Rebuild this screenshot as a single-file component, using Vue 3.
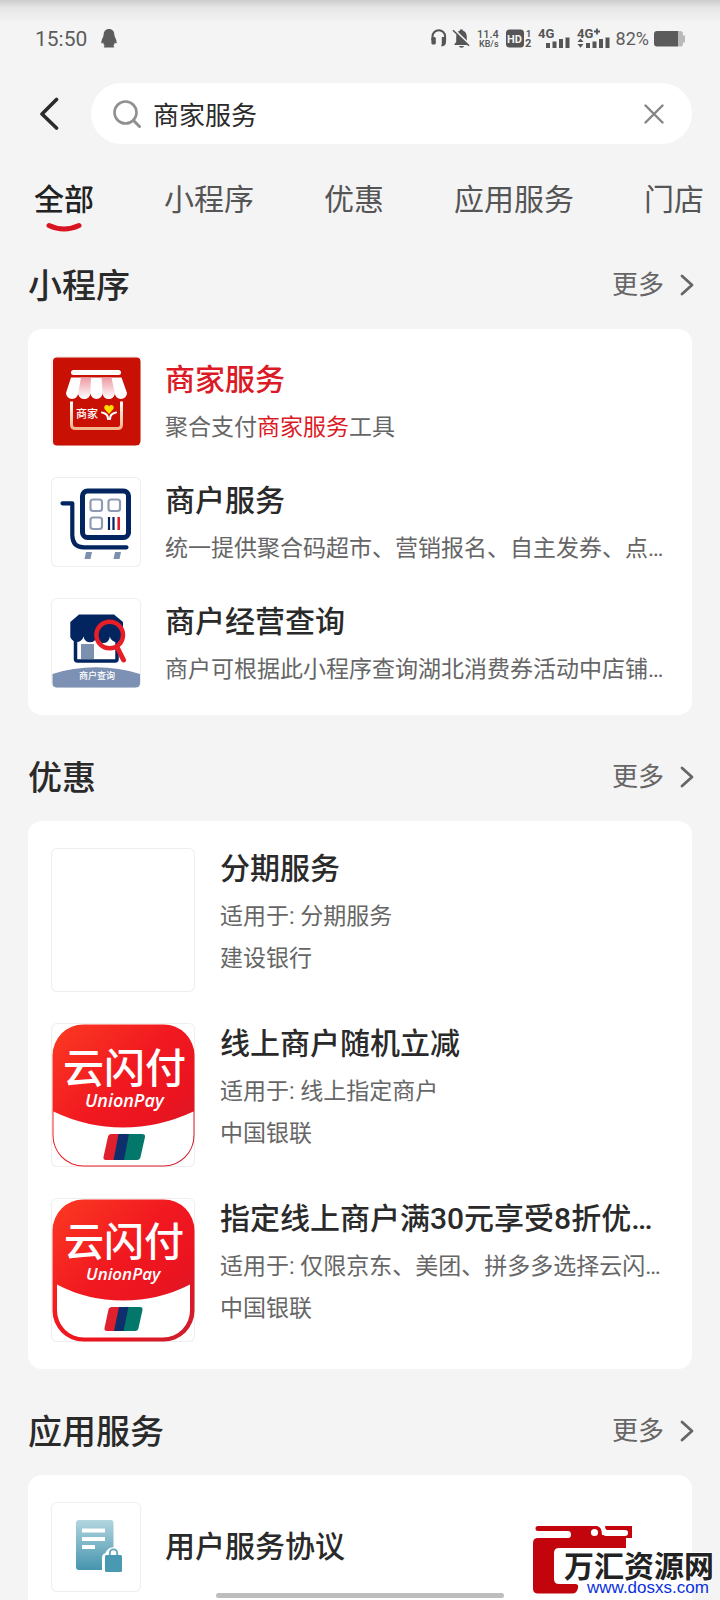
<template>
  <div class="page">
    <header class="status-bar">
      <div class="status-left">
        <span class="time">15:50</span>
        <svg width="16" height="20" viewBox="0 0 16 20" fill="#5c5c5c">
          <path d="M8 0C4.500 0 2.600 2.600 2.600 6C2.600 8 .4 10.500 .3 13.400C.3 15 1.200 14.800 2.200 13.400C2.400 15 3 16 3.800 16.800C2.600 17.200 2.400 18.600 3.500 18.600H12.500C13.600 18.600 13.400 17.200 12.200 16.800C13 16 13.600 15 13.800 13.400C14.800 14.800 15.700 15 15.700 13.400C15.600 10.500 13.400 8 13.400 6C13.400 2.600 11.500 0 8 0Z" />
        </svg>
      </div>
      <div class="status-right">
        <svg class="status-icons" width="182" height="24" viewBox="0 0 182 24" fill="#555">
          <path d="M1.500 13.500V9.500A6.300 6.300 0 0 1 14.100 9.500V13.500" fill="none" stroke="#555" stroke-width="2" />
          <rect x=".4" y="10" width="4.400" height="7.500" rx="1.500" />
          <path d="M10.800 10H15V15C15 17.600 13.500 19.300 10.400 19.600V17.500H10.800Z" />
          <path d="M23.500 18V17L25.200 15V10C25.200 6.500 26.600 4.400 29 3.600V2.500H31.800V3.600C34.500 4.500 35.800 6.800 35.800 10V14.500L38 16.800V18Z" />
          <path d="M28 19H33A2.500 1.800 0 0 1 28 19Z" />
          <path d="M23 2.500L39 18" stroke="#f4f4f4" stroke-width="2" />
          <path d="M22 3.200L38 18.700" stroke="#555" stroke-width="1.600" />
          <text class="medium" x="46" y="11" font-size="11">11.4</text>
          <text class="medium" x="48" y="20" font-size="9">KB/s</text>
          <rect x="75" y="2.500" width="18" height="18" rx="3.500" />
          <text class="heavy" x="76" y="16" font-size="11" fill="#f4f4f4">HD</text>
          <text class="heavy" x="95" y="10" font-size="9">1</text>
          <text class="heavy" x="94" y="20" font-size="11">2</text>
          <text class="heavy" x="107" y="11" font-size="13">4G</text>
          <path d="M115 16h4v5h-4zM121.500 14.500h4v6.500h-4zM128 12h4v9h-4zM134.500 10.500h4v10.500h-4z" />
          <text class="heavy" x="146" y="11" font-size="13">4G</text>
          <path d="M163 4.500h6M166 1.500v6" stroke="#555" stroke-width="1.800" />
          <path d="M146.500 15L149.500 11.500L152.500 15ZM146.500 17H152.500L149.500 20.800Z" />
          <path d="M155 16h4v5h-4zM161.500 14.500h4v6.500h-4zM168 12h4v9h-4zM174.500 10.500h4v10.500h-4z" />
        </svg>
        <span class="percent">82%</span>
        <svg width="32" height="16" viewBox="0 0 32 16">
          <path d="M24 0H26C28 0 29 1 29 3V4.500H31V11.500H29V13C29 15 28 15.500 26 15.500H24Z" fill="#b9b9b9" />
          <path d="M3 0H24V15.500H3C1 15.500 0 14.500 0 12.500V3C0 1 1 0 3 0Z" fill="#5a5a5a" />
        </svg>
      </div>
    </header>

    <form class="search-row" @submit.prevent>
      <button type="button" class="back" aria-label="返回">
        <svg width="20" height="34" viewBox="0 0 20 34">
          <path d="M17.500 2.500L3 17L17.500 31" fill="none" stroke="#2b2b2b" stroke-width="3.600" stroke-linecap="round" stroke-linejoin="round" />
        </svg>
      </button>
      <div class="search-box">
        <svg width="28" height="28" viewBox="0 0 28 28" fill="none" stroke="#909090">
          <circle cx="12.500" cy="12.500" r="11" stroke-width="2.600" />
          <path d="M20.500 20.500L26.500 26.500" stroke-width="3" stroke-linecap="round" />
        </svg>
        <input v-model="keyword" type="text" aria-label="搜索" />
        <button type="button" class="clear" aria-label="清空" @click="keyword = ''">
          <svg width="20" height="20" viewBox="0 0 20 20">
            <path d="M1.500 1.500L18.500 18.500M18.500 1.500L1.500 18.500" stroke="#858585" stroke-width="2.400" stroke-linecap="round" />
          </svg>
        </button>
      </div>
    </form>

    <nav class="tabs">
      <button
        v-for="tab in tabs"
        :key="tab"
        type="button"
        class="tab"
        :class="{ active: tab === activeTab }"
        @click="activeTab = tab"
      >
        {{ tab }}
        <svg v-if="tab === activeTab" class="smile" width="36" height="12" viewBox="0 0 36 12">
          <path d="M3 3.500Q18 10.500 33 3.500" fill="none" stroke="#d7141f" stroke-width="5" stroke-linecap="round" />
        </svg>
      </button>
    </nav>

    <main class="results">
      <section v-for="section in sections" :key="section.title">
        <div class="section-head">
          <h2>{{ section.title }}</h2>
          <a href="#" class="more" @click.prevent>
            更多
            <svg width="14" height="22" viewBox="0 0 14 22">
              <path d="M2 2L12 11L2 20" fill="none" stroke="#666" stroke-width="2.800" stroke-linecap="round" stroke-linejoin="round" />
            </svg>
          </a>
        </div>
        <ul class="card">
          <li v-for="item in section.items" :key="item.title" class="item" :class="{ large: section.large }">
            <div class="thumb">
              <svg v-if="item.icon === 'shop'" viewBox="0 0 90 90">
                <defs>
                  <linearGradient id="stripe" x1="0" y1="0" x2="0" y2="1">
                    <stop offset="0" stop-color="#ee9aa4" />
                    <stop offset="1" stop-color="#fff" />
                  </linearGradient>
                  <linearGradient id="frame" x1="0" y1="0" x2="0" y2="1">
                    <stop offset="0" stop-color="#fff" />
                    <stop offset="1" stop-color="#f5b48c" />
                  </linearGradient>
                </defs>
                <rect x="2" y="1.500" width="87.500" height="88" rx="4" fill="#c81004" />
                <rect x="20" y="14" width="50" height="5" rx="2.500" fill="#fff" />
                <path d="M20 21.500H70.500L76 37A6.100 6.100 0 0 1 63.800 37A6.100 6.100 0 0 1 51.600 37A6.100 6.100 0 0 1 39.400 37A6.100 6.100 0 0 1 27.200 37A6.100 6.100 0 0 1 15 37Z" fill="#fff" />
                <path d="M30 21.500H40L39.400 37A6.100 6.100 0 0 1 27.200 37Z" fill="url(#stripe)" />
                <path d="M50.500 21.500H60.500L63.800 37A6.100 6.100 0 0 1 51.600 37Z" fill="url(#stripe)" />
                <path d="M20.500 45.500V68.500Q20.500 72.500 24.500 72.500H66.500Q70.500 72.500 70.500 68.500V45.500" fill="none" stroke="url(#frame)" stroke-width="3" />
                <text class="icon-text" x="25" y="62" font-size="11" fill="#fff">商家</text>
                <path d="M51 56.500Q57 57.500 57 63M65 56.500Q59 57.500 59 63" fill="none" stroke="#fff" stroke-width="2.200" stroke-linecap="round" />
                <path d="M58 58L54 53.500C51.500 50 56 47 58 50.500C60 47 64.500 50 62 53.500Z" fill="#ffdc00" />
              </svg>
              <svg v-else-if="item.icon === 'cart'" viewBox="0 0 90 90">
                <path d="M11.500 26.300H21.300V58Q21.300 70.300 33 70.300H75.500" fill="none" stroke="#02245f" stroke-width="4.200" stroke-linecap="round" stroke-linejoin="round" />
                <rect x="31.500" y="14" width="46" height="46.500" rx="5" fill="none" stroke="#02245f" stroke-width="5" />
                <g fill="none" stroke="#8f9bb3" stroke-width="2.200">
                  <rect x="39.500" y="22.500" width="11.500" height="11.500" rx="2.500" />
                  <rect x="57.500" y="22.500" width="11.500" height="11.500" rx="2.500" />
                  <rect x="39.500" y="40.500" width="11.500" height="11.500" rx="2.500" />
                </g>
                <path d="M58 40V53M62.500 40V53" stroke="#02245f" stroke-width="2.200" />
                <path d="M67.700 40V53" stroke="#e02027" stroke-width="2.600" />
                <path d="M35 75H41L39.500 82H33.500ZM64 75H70L68.500 82H62.500Z" fill="#7c90b0" />
              </svg>
              <svg v-else-if="item.icon === 'query'" viewBox="0 0 90 90">
                <rect x="24.500" y="30" width="41.500" height="33" rx="2" fill="#fff" stroke="#02245f" stroke-width="3.500" />
                <path d="M28 16.500H63L72 24V36A6.500 6.500 0 0 1 58.800 38.500A6.600 6.600 0 0 1 45.600 38.500A6.600 6.600 0 0 1 32.500 38.500A6.600 6.600 0 0 1 19.300 36V24Z" fill="#02245f" />
                <rect x="30" y="46" width="13" height="15" fill="#7c90b0" />
                <circle cx="58.700" cy="37" r="13.300" fill="none" stroke="#e61e28" stroke-width="4.500" />
                <path d="M66.500 50L72.500 62" stroke="#e61e28" stroke-width="5" stroke-linecap="round" />
                <path d="M1.500 76Q22 69.300 45 69.300T89 76V85Q89 89.500 85 89.500H6Q1.500 89.500 1.500 85Z" fill="#7c91b3" />
                <text class="icon-text" x="28" y="81" font-size="9" fill="#fff">商户查询</text>
              </svg>
              <svg v-else-if="item.icon === 'unionpay'" viewBox="0 0 144 144">
                <defs>
                  <linearGradient id="pay" x1="0" y1="0" x2="1" y2="1">
                    <stop offset="0" stop-color="#fb3a22" />
                    <stop offset=".45" stop-color="#f11820" />
                    <stop offset=".7" stop-color="#ea1420" />
                    <stop offset="1" stop-color="#c8202f" />
                  </linearGradient>
                </defs>
                <rect x="1.500" y="1.500" width="142" height="142" rx="31" fill="url(#pay)" />
                <path d="M2.500 88.500Q36 104.500 72 104.500T142.500 88.500V112A30 30 0 0 1 112.500 142.500H32.500A30 30 0 0 1 2.500 112Z" fill="#fff" />
                <text class="icon-text" x="12" y="60" font-size="41" fill="#fff">云闪付</text>
                <text class="latin-text" x="34" y="84" font-size="18" fill="#fff">UnionPay</text>
                <path d="M60 111H70L64 137H55Q52 137 52.500 134L57 113.500Q57.500 111 60 111Z" fill="#e0202c" />
                <path d="M67.500 111H80L74 137H62.500Z" fill="#0f2f6c" />
                <path d="M78 111H91Q94.500 111 94 114L89.500 134Q89 137 86 137H73Z" fill="#04776b" />
              </svg>
              <svg v-else-if="item.icon === 'unionpay-framed'" viewBox="0 0 144 144">
                <rect x="1.500" y="1.500" width="142" height="142" rx="31" fill="url(#pay)" />
                <path d="M6 86.500Q36 102.500 72 102.500T139 86.500V112A27 27 0 0 1 112 139.500H33A27 27 0 0 1 6 112Z" fill="#fff" />
                <text class="icon-text" x="13" y="58" font-size="40" fill="#fff">云闪付</text>
                <text class="latin-text" x="35" y="82" font-size="17" fill="#fff">UnionPay</text>
                <path d="M61 109H70L64 133H56Q53 133 53.500 130L57.500 111.500Q58 109 61 109Z" fill="#e0202c" />
                <path d="M68 109H79L73.500 133H63Z" fill="#0f2f6c" />
                <path d="M77.500 109H89Q92 109 91.500 112L87.500 130Q87 133 84 133H72.500Z" fill="#04776b" />
              </svg>
              <svg v-else-if="item.icon === 'agreement'" viewBox="0 0 90 90">
                <defs>
                  <linearGradient id="doc" x1="0" y1="0" x2="0" y2="1">
                    <stop offset="0" stop-color="#b3d5df" />
                    <stop offset="1" stop-color="#4594ae" />
                  </linearGradient>
                </defs>
                <path d="M28 18H59.500Q62.500 18 62.500 21V45Q56 46 54.500 51Q51 52 51 56V68H28Q25 68 25 65V21Q25 18 28 18Z" fill="url(#doc)" />
                <path d="M31 26.500H54V30.500H31ZM31 35H54V39H31ZM31 43H44V47H31Z" fill="#fff" />
                <path d="M58.800 54V51A3.700 3.700 0 0 1 66.200 51V54" fill="none" stroke="#5fa5bb" stroke-width="1.800" />
                <rect x="54" y="53" width="17" height="17" rx="1.500" fill="#4a99b3" />
              </svg>
            </div>
            <div class="item-body">
              <h3 :class="{ hit: item.hit }">{{ item.title }}</h3>
              <p v-for="(line, i) in item.lines" :key="i">
                <span v-for="(part, j) in splitHits(line)" :key="j" :class="{ hit: part === term }">{{ part }}</span>
              </p>
            </div>
          </li>
        </ul>
      </section>
    </main>

    <div class="home-bar"></div>

    <svg class="site-mark" width="182" height="72" viewBox="0 0 182 72">
      <path
        d="M5 0H64Q69 1 69 9H75L99 7V12H93V22H26Q21 22 21 27V53Q21 58 26 58H42Q46 58 45 62Q44 67.500 39 67.500H5Q0 67.500 0 62.500V17Q0 12 5 12H35Q38 12 38 8.500T35 5H5Q2.500 5 2.500 2.500T5 0Z"
        fill="#c2040c"
      />
      <path d="M72 0H99V12H90L92 10Q95 9 95 7T92 4H74Q72 3 72 0Z" fill="#c2040c" />
      <rect x="70" y="4" width="25" height="6" rx="3" fill="#fff" />
      <circle cx="61.500" cy="6.500" r="3.600" fill="#fff" />
      <text class="mark-name" x="31" y="51" font-size="30" fill="#222" stroke="#fff" stroke-width="2" paint-order="stroke">万汇资源网</text>
      <text class="mark-url" x="54" y="67" font-size="17" fill="#0a2fe0">www.dosxs.com</text>
    </svg>
  </div>
</template>

<script setup>
import { ref } from 'vue'

const term = '商家服务'
const keyword = ref(term)

const tabs = ['全部', '小程序', '优惠', '应用服务', '门店']
const activeTab = ref('全部')

const sections = [
  {
    title: '小程序',
    items: [
      { icon: 'shop', title: '商家服务', hit: true, lines: ['聚合支付商家服务工具'] },
      { icon: 'cart', title: '商户服务', lines: ['统一提供聚合码超市、营销报名、自主发券、点…'] },
      { icon: 'query', title: '商户经营查询', lines: ['商户可根据此小程序查询湖北消费券活动中店铺…'] }
    ]
  },
  {
    title: '优惠',
    large: true,
    items: [
      { icon: '', title: '分期服务', lines: ['适用于: 分期服务', '建设银行'] },
      { icon: 'unionpay', title: '线上商户随机立减', lines: ['适用于: 线上指定商户', '中国银联'] },
      {
        icon: 'unionpay-framed',
        title: '指定线上商户满30元享受8折优…',
        lines: ['适用于: 仅限京东、美团、拼多多选择云闪…', '中国银联']
      }
    ]
  },
  {
    title: '应用服务',
    items: [{ icon: 'agreement', title: '用户服务协议', lines: [] }]
  }
]

const splitHits = (line) => line.split(new RegExp(`(${term})`)).filter(Boolean)
</script>

<style>
body {
  margin: 0;
  background: #f4f4f4;
}
</style>

<style scoped>
.page {
  position: relative;
  display: flex;
  flex-direction: column;
  height: 100vh;
  overflow: hidden;
  background: linear-gradient(#cdcdcd, #e6e6e6 8px, #f4f4f4 24px);
  color: #2a2a2a;
  font-family: Roboto, 'Noto Sans CJK SC', sans-serif;
}

button,
input {
  border: none;
  padding: 0;
  background: none;
  color: inherit;
  font: inherit;
}

button {
  cursor: pointer;
}

svg {
  display: block;
  flex-shrink: 0;
}

.status-bar {
  display: flex;
  flex-shrink: 0;
  justify-content: space-between;
  align-items: center;
  height: 77px;
  padding: 0 34px 0 35px;
  color: #5c5c5c;
}

.status-left {
  display: flex;
  align-items: center;
  gap: 14px;
}

.time {
  font-size: 21px;
}

.status-right {
  display: flex;
  align-items: center;
  gap: 3px;
}

.percent {
  margin-right: 2px;
  font-size: 18px;
}

.medium {
  font-weight: 500;
}

.heavy {
  font-weight: 700;
}

.search-row {
  display: flex;
  flex-shrink: 0;
  align-items: center;
  gap: 32px;
  padding: 6px 28px 0 39px;
}

.search-box {
  display: flex;
  flex: 1;
  align-items: center;
  gap: 12px;
  height: 61px;
  padding: 0 28px 0 22px;
  border-radius: 31px;
  background: #fff;
}

.search-box input {
  flex: 1;
  min-width: 0;
  height: 40px;
  outline: none;
  font-size: 26px;
}

.tabs {
  display: flex;
  flex-shrink: 0;
  gap: 70px;
  height: 79px;
  padding-left: 34px;
}

.tab {
  position: relative;
  flex-shrink: 0;
  padding: 34px 0 1px;
  color: #555;
  font-size: 30px;
  line-height: 44px;
}

.tab.active {
  color: #222;
  font-weight: 500;
}

.smile {
  position: absolute;
  left: 12px;
  bottom: -11px;
}

.results {
  flex: 1;
  min-height: 0;
  padding: 0 28px;
  overflow: hidden auto;
  scrollbar-width: none;
}

.section-head {
  display: flex;
  justify-content: space-between;
  align-items: center;
  height: 52px;
  margin-right: -2px;
  padding: 37px 0 17px;
}

h2 {
  margin: 0;
  font-size: 34px;
  font-weight: 500;
  line-height: 52px;
}

.more {
  display: flex;
  align-items: center;
  gap: 16px;
  padding-bottom: 2px;
  color: #666;
  font-size: 26px;
  line-height: 36px;
  text-decoration: none;
}

.card {
  display: flex;
  flex-direction: column;
  gap: 31px;
  margin: 0;
  padding: 27px 24px 27px 23px;
  border-radius: 14px;
  background: #fff;
  list-style: none;
}

.item {
  display: flex;
  align-items: center;
  gap: 24px;
}

.item.large {
  align-items: flex-start;
  gap: 25px;
}

.thumb {
  flex-shrink: 0;
  width: 90px;
  height: 90px;
  border-radius: 6px;
  box-shadow: inset 0 0 0 1px #eee;
  overflow: hidden;
}

.thumb svg {
  width: 100%;
  height: 100%;
}

.large .thumb {
  width: 144px;
  height: 144px;
}

.item-body {
  flex: 1;
  min-width: 0;
}

h3,
p {
  margin: 0;
  overflow: hidden;
  white-space: nowrap;
}

h3 {
  font-size: 30px;
  font-weight: 500;
  line-height: 42px;
}

p {
  margin-top: 10px;
  color: #666;
  font-size: 23px;
  line-height: 32px;
}

h3 + p {
  margin-top: 11px;
}

.hit {
  color: #dc1a25;
}

.icon-text {
  font-family: 'Noto Sans CJK SC', sans-serif;
  font-weight: 500;
}

.latin-text {
  font-family: 'Open Sans', sans-serif;
  font-style: italic;
  font-weight: 600;
}

.home-bar {
  position: absolute;
  bottom: 2px;
  left: 30%;
  width: 40%;
  height: 5px;
  border-radius: 3px;
  background: #bdbdbd;
}

.site-mark {
  position: absolute;
  right: 5px;
  bottom: 2px;
}

.mark-name {
  font-family: 'Noto Sans CJK SC', sans-serif;
  font-weight: 700;
}

.mark-url {
  font-family: 'Liberation Sans', Arial, sans-serif;
}
</style>
